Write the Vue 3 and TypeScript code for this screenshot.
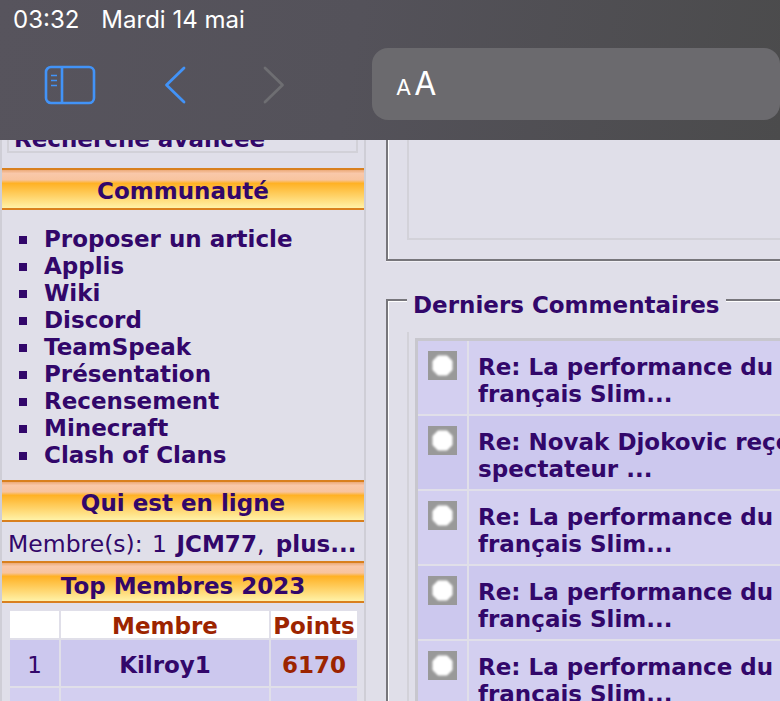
<template>
  <div class="page">
    <header class="topbar">
      <div class="status">
        <span class="time">03:32</span>
        <span>Mardi 14 mai</span>
      </div>
      <div class="tools">
        <svg class="tool sidebar-icon" width="52" height="40" viewBox="0 0 52 40" fill="none">
          <rect x="2" y="2" width="48" height="36" rx="5" stroke="#4293f7" stroke-width="2.6" />
          <path d="M18 2v36" stroke="#4293f7" stroke-width="2.6" />
          <path d="M7 10.500h6M7 15.500h6M7 20.500h6" stroke="#4293f7" stroke-width="1.6" />
        </svg>
        <svg class="tool back-icon" width="24" height="40" viewBox="0 0 24 40" fill="none">
          <path d="M21 3 3.500 20 21 37" stroke="#4293f7" stroke-width="2.8" stroke-linecap="round" stroke-linejoin="round" />
        </svg>
        <svg class="tool next-icon" width="24" height="40" viewBox="0 0 24 40" fill="none">
          <path d="M3 3 20.500 20 3 37" stroke="#6e6e72" stroke-width="2.8" stroke-linecap="round" stroke-linejoin="round" />
        </svg>
        <div class="address"><span class="small-a">A</span><span class="big-a">A</span></div>
      </div>
    </header>

    <main class="content">
      <aside class="left">
        <div class="search-box">Recherche avancée</div>

        <h3 class="band community">Communauté</h3>
        <ul class="links">
          <li v-for="link in links" :key="link">{{ link }}</li>
        </ul>

        <h3 class="band">Qui est en ligne</h3>
        <p class="online">Membre(s): 1 <b>JCM77</b>, <b class="more">plus...</b></p>

        <h3 class="band top">Top Membres 2023</h3>
        <table class="members">
          <tbody>
            <tr class="head">
              <td class="rank"></td>
              <td class="name">Membre</td>
              <td class="pts">Points</td>
            </tr>
            <tr class="row-a">
              <td class="rank">1</td>
              <td class="name">Kilroy1</td>
              <td class="pts">6170</td>
            </tr>
            <tr class="row-b">
              <td class="rank"></td>
              <td class="name"></td>
              <td class="pts"></td>
            </tr>
          </tbody>
        </table>
      </aside>

      <section class="right">
        <div class="upper-box">
          <div class="upper-inner"></div>
        </div>

        <fieldset class="comments">
          <legend>Derniers Commentaires</legend>
          <div class="comment-wrap">
            <div class="comment-list">
              <div
                v-for="(c, i) in comments"
                :key="i"
                class="comment"
                :class="i % 2 ? 'odd' : 'even'"
              >
                <div class="bullet-cell">
                  <svg width="29" height="29" viewBox="0 0 29 29">
                    <rect width="29" height="29" fill="#999999" />
                    <path class="dot" d="M10 4.500h9l5.500 5.500v9l-5.500 5.500h-9l-5.500-5.500v-9z" />
                  </svg>
                </div>
                <div class="title-cell">{{ c[0] }}<br />{{ c[1] }}</div>
              </div>
            </div>
          </div>
        </fieldset>
      </section>
    </main>
  </div>
</template>

<script setup lang="ts">
const links: string[] = [
  'Proposer un article',
  'Applis',
  'Wiki',
  'Discord',
  'TeamSpeak',
  'Présentation',
  'Recensement',
  'Minecraft',
  'Clash of Clans'
];

const perf: [string, string] = ['Re: La performance du français', 'français Slim...'];

const comments: [string, string][] = [
  perf,
  ['Re: Novak Djokovic reçoit un', 'spectateur ...'],
  perf,
  perf,
  perf
];
</script>

<style scoped>
.page {
  position: relative;
  width: 780px;
  height: 701px;
  overflow: hidden;
  background: #e0dfe9;
  color: #32076a;
  font-family: "DejaVu Sans", sans-serif;
}

.topbar {
  position: absolute;
  top: 0;
  left: 0;
  right: 0;
  z-index: 2;
  height: 140px;
  background: linear-gradient(100deg, #57545d 0%, #54525a 45%, #4b4b4c 100%);
  color: #fff;
  font-family: Inter, sans-serif;
}

.status {
  display: flex;
  gap: 22px;
  padding: 7px 0 0 13px;
  font-size: 24px;
  line-height: 26px;
}

.tools {
  display: flex;
  align-items: flex-start;
  padding-top: 15px;
}

.tool {
  flex: none;
}

.sidebar-icon {
  margin: 17px 0 0 44px;
}

.back-icon {
  margin: 17px 0 0 67px;
}

.next-icon {
  margin: 17px 0 0 75px;
}

.address {
  width: 420px;
  height: 72px;
  margin-left: 86px;
  padding-left: 24px;
  box-sizing: border-box;
  border-radius: 16px;
  background: #6b6a6e;
  line-height: 72px;
  white-space: nowrap;
}

.small-a {
  font-size: 22px;
}

.big-a {
  margin-left: 3px;
  font-size: 32px;
}

.content {
  display: flex;
  align-items: flex-start;
  padding-top: 126px;
}

.left {
  flex: none;
  width: 362px;
  height: 575px;
  border-left: 2px solid #cfced6;
  border-right: 2px solid #cfced6;
}

.search-box {
  box-sizing: border-box;
  width: 351px;
  height: 27px;
  margin-left: 5px;
  padding-left: 5px;
  border: 2px solid #d2d1d8;
  border-top: none;
  font-size: 23px;
  font-weight: 700;
  line-height: 26px;
}

.band {
  margin: 0;
  height: 42px;
  box-sizing: border-box;
  border-top: 2px solid #d9801e;
  border-bottom: 2px solid #d9801e;
  background: linear-gradient(#ecaa78 0%, #f9c8aa 9%, #f8c49e 26%, #ffb124 35%, #fff2a8 100%);
  font-size: 23px;
  font-weight: 700;
  line-height: 43px;
  text-align: center;
}

.community {
  margin-top: 15px;
}

.links {
  margin: 0;
  padding: 16px 0 11px 42px;
  list-style: none;
  font-size: 23px;
  font-weight: 700;
  line-height: 27px;
}

.links li {
  position: relative;
}

.links li::before {
  content: "";
  position: absolute;
  left: -25px;
  top: 10px;
  width: 8px;
  height: 8px;
  background: #32076a;
}

.online {
  margin: 0;
  height: 39px;
  padding-left: 6px;
  font-size: 23.500px;
  line-height: 44px;
  word-spacing: 2px;
  white-space: nowrap;
}

.online b {
  font-size: 23px;
}

.online .more {
  margin-left: 2px;
}

.top {
  margin-bottom: 6px;
  line-height: 47px;
}

.members {
  width: 351px;
  margin-left: 6px;
  border-collapse: separate;
  border-spacing: 2px;
  table-layout: fixed;
  font-size: 23px;
  line-height: 27px;
  text-align: center;
}

.members td {
  padding: 0;
}

.rank {
  width: 49px;
}

.name {
  width: 208px;
  font-weight: 700;
}

.pts {
  font-weight: 700;
  color: #9c2400;
}

.members .head td {
  height: 24px;
  padding-top: 3px;
  line-height: 24px;
  background: #fff;
}

.head .name {
  color: #9c2400;
}

.members .row-a td {
  height: 42px;
  padding-top: 4px;
  background: #ccc8ee;
}

.row-b td {
  height: 46px;
  background: #d3cff0;
}

.right {
  flex: 1;
  min-width: 0;
  padding-left: 20px;
}

.upper-box {
  box-sizing: border-box;
  width: 420px;
  height: 135px;
  padding: 0 0 19px 19px;
  border-left: 2px solid #77767b;
  border-bottom: 2px solid #77767b;
  box-shadow: inset 1px 0 0 #fff, 0 1px 0 #f2f1f6;
}

.upper-inner {
  height: 112px;
  border-left: 2px solid #d3d2d9;
  border-bottom: 2px solid #d3d2d9;
}

.comments {
  box-sizing: border-box;
  width: 420px;
  margin: 20px 0 0;
  padding: 13px 0 0 19px;
  border: none;
  border-top: 2px solid #77767b;
  border-left: 2px solid #77767b;
  box-shadow: inset 1px 1px 0 #fff;
}

.comments legend {
  margin-left: 0;
  padding: 11px 6px 0;
  background: #e0dfe9;
  font-size: 23px;
  font-weight: 700;
  line-height: 27px;
}

.comment-wrap {
  padding: 6px 0 0 6px;
  border-left: 2px solid #d3d2d9;
}

.comment-list {
  border-top: 3px solid #c8c7ce;
  border-left: 3px solid #c8c7ce;
}

.comment {
  display: flex;
  height: 73px;
  margin-bottom: 2px;
}

.bullet-cell {
  flex: none;
  width: 49px;
  margin-right: 2px;
  padding: 10px 0 0 10px;
  box-sizing: border-box;
}

.bullet-cell svg {
  display: block;
}

.dot {
  fill: #fff;
  filter: blur(1px);
}

.title-cell {
  flex: 1;
  padding: 13px 0 0 9px;
  font-size: 23px;
  font-weight: 700;
  line-height: 27px;
  white-space: nowrap;
  overflow: hidden;
}

.even .bullet-cell,
.even .title-cell {
  background: #d3cff0;
}

.odd .bullet-cell,
.odd .title-cell {
  background: #ccc8ee;
}
</style>

<style>
html,
body {
  margin: 0;
  overflow: hidden;
}
</style>
